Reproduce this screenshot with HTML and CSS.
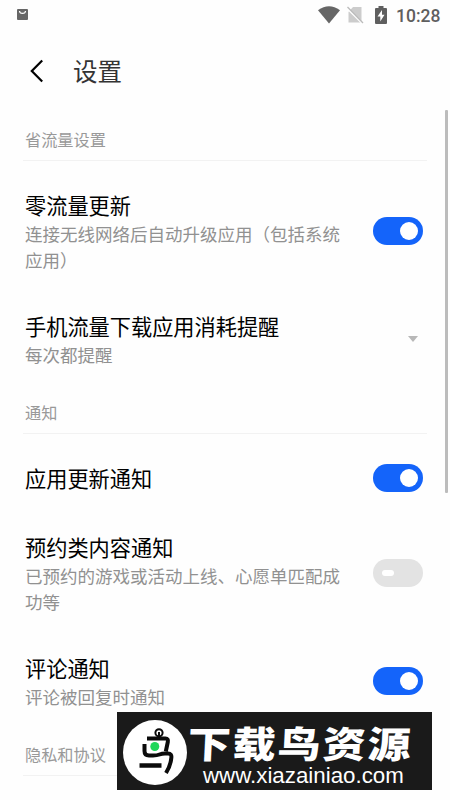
FILE: index.html
```html
<!DOCTYPE html>
<html lang="zh-CN">
<head>
<meta charset="utf-8">
<title>设置</title>
<link rel="stylesheet" href="styles.css">
</head>
<body>
<div class="screen">
  <div class="statusbar">
    <svg class="bag" width="11" height="11" viewBox="0 0 11 11"><rect width="11" height="11" rx="1" fill="#666"/><path d="M2.5 2C2.7 5.2 8.3 5.2 8.5 2" fill="none" stroke="#fff" stroke-width="1.2"/></svg>
    <div class="status-icons">
      <svg class="wifi" width="22" height="18" viewBox="0 0 22 18"><path d="M0 4.3Q11-3.8 22 4.3L11 17.5Z" fill="#666"/></svg>
      <svg class="sim" width="17" height="18" viewBox="0 0 17 18"><path d="M6 1H14.5V16.5H1.5V6Z" fill="#ccc"/><path d="M0 2L16 18" stroke="#fff" stroke-width="2"/><path d="M.5 1L16 17" stroke="#bbb" stroke-width="1.3"/></svg>
      <svg class="battery" width="12" height="18" viewBox="0 0 12 18"><path d="M3.5 0H8.5V2H11Q12 2 12 3V17Q12 18 11 18H1Q0 18 0 17V3Q0 2 1 2H3.5Z" fill="#5f5f5f"/><path d="M7 4L2.5 10.5H5.3V15.5L9.5 8.7H7Z" fill="#fff"/></svg>
      <span class="clock">10:28</span>
    </div>
  </div>
  <header class="header">
    <svg width="14" height="24" viewBox="0 0 14 24"><path d="M12.2 1.5L1.8 12L12.2 22.5" fill="none" stroke="#000" stroke-width="2.2"/></svg>
    <h1>设置</h1>
  </header>
  <main class="settings">
    <h2 class="section">省流量设置</h2>
    <div class="row">
      <div class="text"><div class="title">零流量更新</div><div class="desc">连接无线网络后自动升级应用（包括系统<br>应用）</div></div>
      <span class="toggle on"></span>
    </div>
    <div class="row">
      <div class="text"><div class="title">手机流量下载应用消耗提醒</div><div class="desc">每次都提醒</div></div>
      <svg class="caret" width="10" height="6" viewBox="0 0 10 6"><path d="M0 0H10L5 6Z" fill="#b8b8b8"/></svg>
    </div>
    <h2 class="section">通知</h2>
    <div class="row">
      <div class="text"><div class="title">应用更新通知</div></div>
      <span class="toggle on"></span>
    </div>
    <div class="row">
      <div class="text"><div class="title">预约类内容通知</div><div class="desc">已预约的游戏或活动上线、心愿单匹配成<br>功等</div></div>
      <span class="toggle"></span>
    </div>
    <div class="row">
      <div class="text"><div class="title">评论通知</div><div class="desc">评论被回复时通知</div></div>
      <span class="toggle on"></span>
    </div>
    <h2 class="section">隐私和协议</h2>
  </main>
  <div class="scrollbar"></div>
  <div class="banner">
    <svg class="logo" width="64" height="65" viewBox="0 0 64 65"><ellipse cx="32" cy="32.5" rx="32" ry="32.5" fill="#fff"/><g fill="none" stroke="#0b0b0b"><circle cx="36" cy="12.8" r="3.6" stroke-width="2"/><path d="M36 12V18" stroke-width="2"/><path d="M24 18.5H42.5Q45.5 18.5 44.8 22L42.8 31.5" stroke-width="4"/><path d="M21.5 24V31Q21.5 35.5 26 35.5H30Q34 35.5 36.5 34.5T42 33.5H45Q49 33.5 48.3 38Q47.5 46 43 53" stroke-width="4"/><path d="M16.5 45.5H38.5" stroke-width="4.5"/></g><circle cx="31.8" cy="26.5" r="4.5" fill="#20d65a"/></svg>
    <div class="brand"><div class="brand-name">下载鸟资源</div><div class="brand-url">www.xiazainiao.com</div></div>
  </div>
</div>
</body>
</html>
```
FILE: styles.css
```css
* { box-sizing: border-box; }
body { margin: 0; background: #fefefe; font-family: "Noto Sans CJK SC", sans-serif; }
.screen { position: relative; width: 450px; height: 800px; overflow: hidden; }
.statusbar { display: flex; justify-content: space-between; height: 32px; padding: 0 10px 0 17px; }
.bag { margin-top: 9px; }
.status-icons { display: flex; align-items: flex-start; color: #5f5f5f; }
.wifi { margin-top: 6px; }
.sim { margin: 6px 0 0 7px; }
.battery { margin: 6px 0 0 11px; }
.clock { width: 44px; margin-left: 9px; font: 500 17.5px/32px Roboto, sans-serif; white-space: nowrap; }
.header { display: flex; align-items: center; height: 77px; padding: 0 30px; }
.header h1 { margin: 0 0 0 29px; padding-top: 1px; font-size: 24.5px; font-weight: 400; line-height: 36px; color: #333; }
.settings { padding: 11px 23px 0; }
.section { height: 41px; margin: 0 0 29px; padding-left: 2px; border-bottom: 1px solid #f2f2f2; font-size: 16.2px; font-weight: 400; line-height: 39px; color: #999; }
.row { display: flex; align-items: center; justify-content: space-between; margin-bottom: 38.5px; padding: 0 4px 0 2px; }
.row:has(+ .section) { margin-bottom: 25.5px; }
.title { padding-bottom: 2px; font-size: 21.2px; line-height: 29px; color: #000; white-space: nowrap; }
.desc { font-size: 17.5px; line-height: 25.5px; color: #919191; white-space: nowrap; }
.toggle { display: flex; align-items: center; flex: none; width: 50px; height: 28px; padding: 0 5px 0 9px; border-radius: 14px; background: #e3e3e3; }
.toggle::before { content: ""; width: 12px; height: 6px; border-radius: 3px; background: #fff; }
.toggle.on { justify-content: flex-end; background: #1464fa; }
.toggle.on::before { width: 18px; height: 18px; border-radius: 50%; }
.caret { margin-right: 5px; }
.scrollbar { position: absolute; left: 445px; top: 110px; width: 2.5px; height: 383px; border-radius: 1px; background: #bcbcbc; }
.banner { position: absolute; left: 117px; top: 712px; display: flex; width: 315px; height: 78px; padding: 8px 0 0 6px; background: #1a1a1a; color: #fff; }
.logo { flex: none; }
.brand { margin-left: 1px; }
.brand-name { height: 41px; font-size: 43px; font-weight: 900; line-height: 45px; transform: skewX(-3deg) scaleY(.86); letter-spacing: 2px; white-space: nowrap; }
.brand-url { margin-left: 15px; font: 22.3px/30px "Liberation Sans", sans-serif; white-space: nowrap; }
```
